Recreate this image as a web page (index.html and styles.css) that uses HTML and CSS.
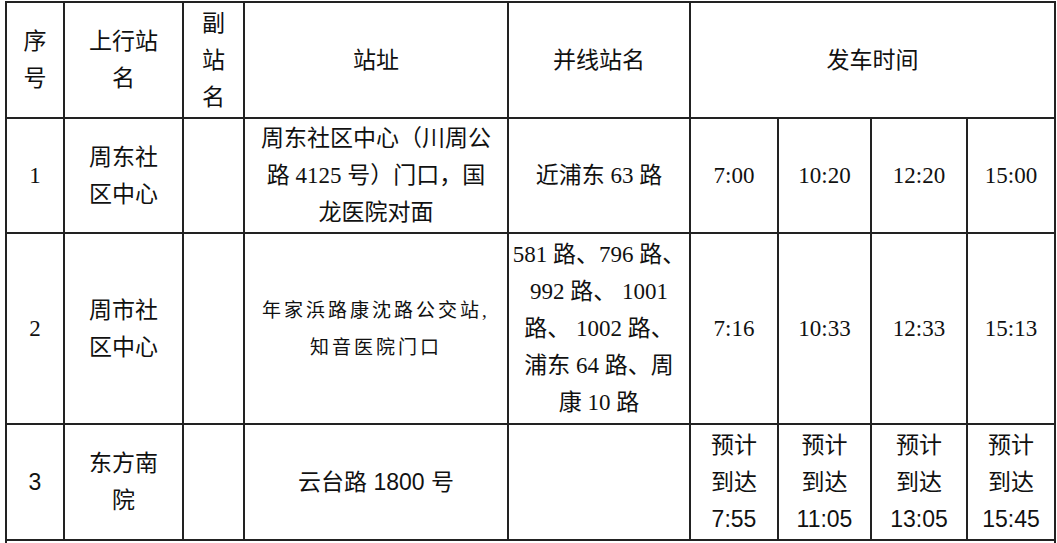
FILE: index.html
```html
<!DOCTYPE html>
<html lang="zh-CN">
<head>
<meta charset="utf-8">
<title>班车时刻表</title>
<link rel="stylesheet" href="styles.css">
</head>
<body>
<table class="schedule">
  <colgroup>
    <col class="c-no">
    <col class="c-name">
    <col class="c-sub">
    <col class="c-addr">
    <col class="c-par">
    <col class="c-t1">
    <col class="c-t2">
    <col class="c-t3">
    <col class="c-t4">
  </colgroup>
  <tbody>
    <tr class="r-head">
      <td>序<br>号</td>
      <td>上行站<br>名</td>
      <td>副<br>站<br>名</td>
      <td>站址</td>
      <td>并线站名</td>
      <td colspan="4">发车时间</td>
    </tr>
    <tr class="r-1">
      <td>1</td>
      <td>周东社<br>区中心</td>
      <td></td>
      <td>周东社区中心（川周公<br>路 4125 号）门口，国<br>龙医院对面</td>
      <td>近浦东 63 路</td>
      <td>7:00</td>
      <td>10:20</td>
      <td>12:20</td>
      <td>15:00</td>
    </tr>
    <tr class="r-2">
      <td>2</td>
      <td>周市社<br>区中心</td>
      <td></td>
      <td class="small">年家浜路康沈路公交站,<br>知音医院门口</td>
      <td>581 路、796 路、<br>992 路、 1001<br>路、 1002 路、<br>浦东 64 路、周<br>康 10 路</td>
      <td>7:16</td>
      <td>10:33</td>
      <td>12:33</td>
      <td>15:13</td>
    </tr>
    <tr class="r-3 sans">
      <td>3</td>
      <td>东方南<br>院</td>
      <td></td>
      <td>云台路 1800 号</td>
      <td></td>
      <td>预计<br>到达<br>7:55</td>
      <td>预计<br>到达<br>11:05</td>
      <td>预计<br>到达<br>13:05</td>
      <td>预计<br>到达<br>15:45</td>
    </tr>
    <tr class="r-4">
      <td colspan="9"></td>
    </tr>
  </tbody>
</table>
</body>
</html>
```

FILE: styles.css
```css
html, body {
  margin: 0;
  padding: 0;
  background: #fff;
}

body {
  overflow: hidden;
  height: 543px;
  color: #111;
  font-family: "Liberation Serif", "Noto Sans CJK SC", serif;
  font-size: 23px;
  line-height: 37px;
}

.schedule {
  margin: 1px 0 0 5px;
  border-collapse: collapse;
  table-layout: fixed;
  width: 1049px;
}

.schedule td {
  border: 2px solid #222;
  padding: 0 2px;
  text-align: center;
  vertical-align: middle;
  white-space: nowrap;
}

.c-no { width: 58px; }
.c-name { width: 119px; }
.c-sub { width: 61px; }
.c-addr { width: 264px; }
.c-par { width: 182px; }
.c-t1 { width: 88px; }
.c-t2 { width: 93px; }
.c-t3 { width: 96px; }
.c-t4 { width: 88px; }

.r-head { height: 116px; }
.r-1 { height: 115px; }
.r-2 { height: 191px; }
.r-3 { height: 116px; }
.r-4 { height: 40px; }

.small {
  font-size: 19px;
  letter-spacing: 3px;
}

.sans td {
  font-family: "Liberation Sans", "Noto Sans CJK SC", sans-serif;
}
```
